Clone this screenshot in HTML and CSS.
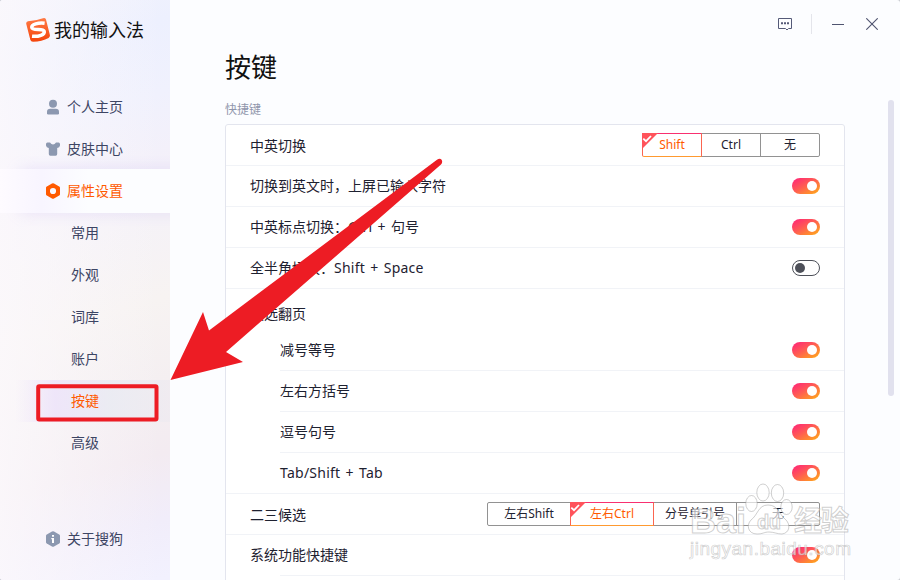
FILE: index.html
```
<!DOCTYPE html>
<html lang="zh-CN">
<head>
    <meta charset="UTF-8">
    <meta name="viewport" content="width=device-width, initial-scale=1.0">
    <title>我的输入法</title>
    <link rel="stylesheet" href="styles.css">
</head>
<body>
    <div class="window">
        <div class="sidebar">
            <div class="logo">
                <svg width="24" height="25" viewBox="0 0 24 25">
                    <defs>
                        <linearGradient id="logo-bg" x1="0" y1="0" x2="0" y2="1">
                            <stop offset="0" stop-color="#ff7a45"/>
                            <stop offset="1" stop-color="#f4450c"/>
                        </linearGradient>
                    </defs>
                    <path d="M2 4.2Q10 3.8 17 1.2 19.6.4 20 2.6L23.9 18Q24.200 20 22.600 21 16 24.600 7 24.800 4.800 24.800 4.300 22.800L.2 6.800Q0 4.400 2 4.200z" fill="url(#logo-bg)"/>
                    <path d="M18.600 6.300C12.500 5.500 5.300 7.400 5.800 10.600 6.300 14 17.200 11.300 18.200 14.300 19 17.700 12.500 19.900 6 19.200" fill="none" stroke="#fff" stroke-width="3.500"/>
                </svg>
                <span>我的输入法</span>
            </div>
            <div class="menu">
                <a class="menu-item">
                    <svg width="14" height="16" viewBox="0 0 14 16"><circle cx="7" cy="4.700" r="4" fill="#8c98b0"/><path d="M1 12.700Q1 9.700 4.200 9.700H9.800Q13 9.700 13 12.700V14.300Q13 15.500 11.800 15.500H2.200Q1 15.500 1 14.300z" fill="#8c98b0"/></svg>
                    <span>个人主页</span>
                </a>
                <a class="menu-item">
                    <svg width="14" height="16" viewBox="0 0 14 16"><path d="M1.400 1.500H4Q5.300 3.500 7 3.500T10 1.500H12.600Q14 1.700 14 3.200V4.600Q13.700 7 11.200 7V13Q11.200 14.700 9.700 14.700H4.300Q2.800 14.700 2.800 13V7Q.3 7 0 4.600V3.200Q0 1.700 1.400 1.500z" fill="#8c98b0"/></svg>
                    <span>皮肤中心</span>
                </a>
                <a class="menu-item active">
                    <svg width="14" height="16" viewBox="0 0 14 16"><path fill-rule="evenodd" d="M6 .4Q7 0 8 .4L13.200 3.400Q14 3.900 14 4.800V11.200Q14 12.100 13.200 12.600L8 15.600Q7 16 6 15.600L.8 12.600Q0 12.100 0 11.200V4.800Q0 3.900.8 3.400zM7 4.900A3.100 3.100 0 1 0 7 11.100A3.100 3.100 0 1 0 7 4.900z" fill="#ff5a00"/></svg>
                    <span>属性设置</span>
                </a>
                <a class="menu-sub">常用</a>
                <a class="menu-sub">外观</a>
                <a class="menu-sub">词库</a>
                <a class="menu-sub">账户</a>
                <a class="menu-sub current">按键</a>
                <a class="menu-sub">高级</a>
            </div>
            <a class="menu-item about">
                <svg width="14" height="16" viewBox="0 0 14 16"><path d="M6 .4Q7 0 8 .4L13.200 3.400Q14 3.900 14 4.800V11.200Q14 12.100 13.200 12.600L8 15.600Q7 16 6 15.600L.8 12.600Q0 12.100 0 11.200V4.800Q0 3.900.8 3.400z" fill="#8c98b0"/><path d="M6 4h2v1.800H6zM5.300 7H8v5H6V8.200h-.7z" fill="#fff"/></svg>
                <span>关于搜狗</span>
            </a>
        </div>

        <div class="main">
            <div class="titlebar">
                <svg class="feedback" width="14" height="13" viewBox="0 0 14 13"><path d="M.5.5h13v10H10.500L9 12 7.500 10.500H.5z" fill="none" stroke="#555a78"/><path d="M3 4.200h2v2H3zM6 4.200h2v2H6zM9 4.200h2v2H9z" fill="#555a78"/></svg>
                <i class="line"></i>
                <i class="minimize"></i>
                <svg width="12" height="12" viewBox="0 0 12 12"><path d="M.3.3l11.400 11.400M11.700.3L.3 11.700" stroke="#4f5470" stroke-width="1.100"/></svg>
            </div>
            <h1>按键</h1>
            <h2>快捷键</h2>
            <div class="card">
                <div class="row with-segment">
                    <span>中英切换</span>
                    <div class="segment">
                        <a class="selected"><svg class="check" width="16" height="16" viewBox="0 0 16 16"><path d="M0 0h16L0 16z" fill="#ff535b"/><path d="M1.300 5.600 4 8.200 9 3" fill="none" stroke="#fff" stroke-width="1.800"/></svg>Shift</a>
                        <a>Ctrl</a>
                        <a>无</a>
                    </div>
                </div>
                <div class="row"><span>切换到英文时，上屏已输入字符</span><i class="switch on"></i></div>
                <div class="row"><span>中英标点切换：<b>Ctrl + </b>句号</span><i class="switch on"></i></div>
                <div class="row"><span>全半角切换：<b>Shift + Space</b></span><i class="switch"></i></div>
                <div class="row group-title"><span>候选翻页</span></div>
                <div class="row sub"><span>减号等号</span><i class="switch on"></i></div>
                <div class="row sub"><span>左右方括号</span><i class="switch on"></i></div>
                <div class="row sub"><span>逗号句号</span><i class="switch on"></i></div>
                <div class="row sub-last"><span><b>Tab/Shift + Tab</b></span><i class="switch on"></i></div>
                <div class="row with-segment">
                    <span>二三候选</span>
                    <div class="segment wide">
                        <a>左右Shift</a>
                        <a class="selected"><svg class="check" width="16" height="16" viewBox="0 0 16 16"><path d="M0 0h16L0 16z" fill="#ff535b"/><path d="M1.300 5.600 4 8.200 9 3" fill="none" stroke="#fff" stroke-width="1.800"/></svg>左右Ctrl</a>
                        <a>分号单引号</a>
                        <a>无</a>
                    </div>
                </div>
                <div class="row group-head"><span>系统功能快捷键</span><i class="switch on"></i></div>
                <div class="row sub first"></div>
            </div>
            <i class="scrollbar"></i>
        </div>
    </div>

    <!-- annotations and watermark -->
    <svg class="overlay" width="900" height="580" viewBox="0 0 900 580">
        <path d="M170.500 380 203 312 209 330.500 437 159.800Q440 157.800 441.600 159.800 443 162 441 164.600L226 352 243 362z" fill="#ed1c24"/>
        <rect x="38.200" y="386.200" width="118.300" height="33.300" rx="1" fill="none" stroke="#ed1c24" stroke-width="4"/>
        <g class="watermark">
            <text class="brand" x="690" y="533" textLength="56" lengthAdjust="spacingAndGlyphs">Bai</text>
            <ellipse cx="751.500" cy="503.500" rx="5.700" ry="8"/>
            <ellipse cx="763" cy="492.500" rx="6.200" ry="8.500"/>
            <ellipse cx="777.500" cy="493" rx="6.200" ry="8.500"/>
            <ellipse cx="786.500" cy="507" rx="5.700" ry="7.500"/>
            <path d="M768 505C758 505 758 515 751 520 746 525 748 534 757 534 763 534 764 532 769 532 774 532 777 534 782 534 790 533 791 524 785 519 779 514 778 505 768 505z"/>
            <text class="du" x="757" y="529" textLength="24">du</text>
            <text class="brand cn" x="794" y="531" textLength="55">经验</text>
            <text class="site" x="690" y="555" textLength="161">jingyan.baidu.com</text>
        </g>
    </svg>
</body>
</html>
```
FILE: styles.css
```
body {
    margin: 0;
    overflow: hidden;
    background: #c9cbd1;
    font-family: "Noto Sans", "Noto Sans CJK SC", sans-serif;
    font-size: 14px;
    color: #1e2130;
}
.window {
    width: 900px;
    height: 580px;
    display: flex;
    overflow: hidden;
    border-radius: 3px;
    background: #fcfdff;
}
.sidebar {
    width: 170px;
    height: 580px;
    box-sizing: border-box;
    padding-bottom: 20px;
    display: flex;
    flex-direction: column;
    background:
        linear-gradient(90deg, rgba(252, 249, 252, 0.8), rgba(252, 249, 252, 0) 95%),
        linear-gradient(165deg, #f1f2fc 0, #edf0fe 60px, #f0f1fd 130px, #f4f0f9 205px, #f5f2f7 250px, #f7f3f2 330px, #f4eff1 410px, #f3ebf1 480px, #f1edfa 545px, #f2f1fe 600px);
}
.logo {
    height: 86px;
    box-sizing: border-box;
    padding: 17px 0 0 26px;
    display: flex;
    align-items: flex-start;
    color: #111;
}
.logo span {
    margin-left: 4px;
    line-height: 27px;
    font-size: 18px;
    white-space: nowrap;
}
.menu {
    flex: 1;
}
.menu-item {
    height: 42px;
    padding-left: 46px;
    display: flex;
    align-items: center;
    color: #3d4564;
}
.menu-item span {
    margin-left: 7px;
    padding-bottom: 2px;
}
.menu-item.active {
    height: 44px;
    margin: -1px 0;
    color: #ff5a00;
    background: linear-gradient(90deg, #fefbff 0, #f8f5ff 42px, #fcfdff 88px);
    box-shadow: 20px 0 16px rgba(170, 150, 235, 0.2);
    clip-path: inset(-14px 0);
}
.menu-sub {
    height: 42px;
    line-height: 42px;
    padding-left: 71px;
    display: block;
    color: #3d4564;
}
.menu-sub.current {
    color: #ff5a00;
    background: linear-gradient(90deg, rgba(236, 226, 250, 0) 15px, rgba(236, 226, 250, 0.8) 55px, rgba(232, 234, 242, 0.8) 110px, rgba(238, 234, 240, 0.7));
}
.main {
    flex: 1;
    position: relative;
    padding-left: 55px;
}
.titlebar {
    height: 48px;
    padding-right: 22px;
    display: flex;
    align-items: center;
    justify-content: flex-end;
}
.line {
    width: 1px;
    height: 20px;
    margin: 0 20px 0 19px;
    background: #e4e5eb;
}
.minimize {
    width: 12px;
    height: 1px;
    margin-right: 22px;
    background: #4f5470;
}
h1 {
    height: 38px;
    line-height: 38px;
    margin: 0;
    font-size: 26px;
    font-weight: normal;
    color: #111;
}
h2 {
    height: 38px;
    line-height: 47px;
    margin: 0;
    font-size: 12px;
    font-weight: normal;
    color: #9096ac;
}
.card {
    width: 618px;
    border: 1px solid #e3e5ee;
    border-radius: 3px;
    background: #fff;
}
.row {
    height: 40px;
    padding: 0 24px;
    display: flex;
    align-items: center;
    justify-content: space-between;
    border-bottom: 1px solid #f1f3f7;
}
.row span {
    padding-bottom: 2px;
}
.row.with-segment span {
    padding-bottom: 0;
}
.row b {
    font-weight: normal;
    letter-spacing: 0.25px;
    word-spacing: 1.3px;
}
.row.sub {
    margin-left: 54px;
    padding-left: 0;
}
.row.sub-last {
    padding-left: 54px;
}
.row.group-title {
    height: 33px;
    padding-top: 8px;
    border-bottom: 0;
}
.row.group-head {
    border-bottom: 0;
}
.row.sub.first {
    border-top: 1px solid #f1f3f7;
}
.switch {
    width: 28px;
    height: 16px;
    box-sizing: border-box;
    padding: 2px;
    border: 1px solid #4d5059;
    border-radius: 8px;
}
.switch::before {
    content: "";
    width: 10px;
    height: 10px;
    display: block;
    border-radius: 50%;
    background: #4d5059;
}
.switch.on {
    padding: 3px;
    border: 0;
    background: linear-gradient(150deg, #ff2d72 10%, #ff5a54 45%, #ffa020 90%);
}
.switch.on::before {
    margin-left: 12px;
    background: #fff;
}
.segment {
    display: flex;
    font-size: 12px;
}
.segment a {
    width: 60px;
    height: 24px;
    line-height: 22px;
    box-sizing: border-box;
    margin-left: -1px;
    border: 1px solid #929292;
    text-align: center;
    white-space: nowrap;
}
.segment.wide a {
    width: 84px;
}
.segment a:first-child {
    margin-left: 0;
    border-radius: 2px 0 0 2px;
}
.segment a:last-child {
    border-radius: 0 2px 2px 0;
}
.segment .selected {
    position: relative;
    z-index: 1;
    color: #ff5a00;
    border-color: #f83070 #fb6550 #ff9a30;
}
.check {
    position: absolute;
    left: -1px;
    top: -1px;
}
.scrollbar {
    position: absolute;
    right: 6px;
    top: 100px;
    width: 6px;
    height: 296px;
    border-radius: 3px;
    background: #e1e1ee;
}
.overlay {
    position: absolute;
    left: 0;
    top: 0;
    pointer-events: none;
}
.watermark {
    fill: rgba(255, 255, 255, 0.65);
    stroke: rgba(160, 160, 160, 0.5);
    stroke-width: 1;
}
.brand {
    font: bold 35px "Liberation Sans", sans-serif;
}
.brand.cn {
    font: bold 28px "Noto Sans CJK SC", sans-serif;
}
.du {
    font: bold 20px "Liberation Sans", sans-serif;
}
.site {
    font: 19px "Liberation Sans", sans-serif;
    stroke-width: 0.7;
}
```
